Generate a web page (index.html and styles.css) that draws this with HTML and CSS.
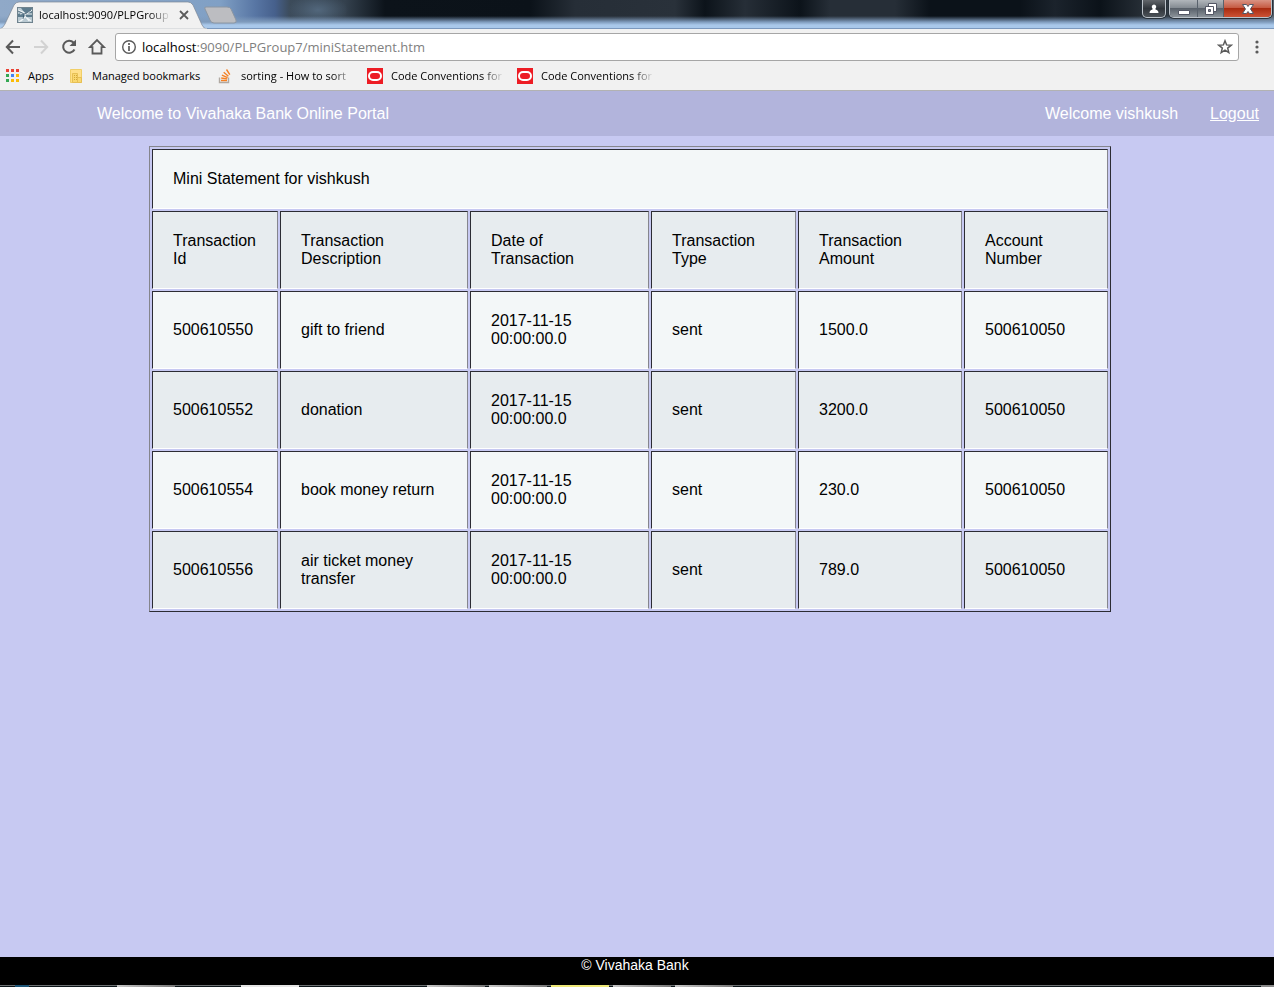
FILE: index.html
```html
<!DOCTYPE html>
<html lang="en">
<head>
<meta charset="utf-8">
<title>Mini Statement</title>
<link rel="stylesheet" href="styles.css">
</head>
<body>
<div class="browser">
  <div class="titlebar">
    <div class="tab">
      <svg class="tab-shape" viewBox="0 0 207 28" width="207" height="28" aria-hidden="true"><path d="M0 28 Q3 27 5 23 L14 4 Q16 1 19 1 H188 Q191 1 193 4 L202 24 Q204 28 207 28Z" fill="#f1f1f1" stroke="#7d8795" stroke-width=".7"/><path d="M0 27.500H207V28H0Z" fill="#f1f1f1"/></svg>
      <svg class="favicon" viewBox="0 0 16 16" width="16" height="16" aria-hidden="true"><path fill="#5e7c8e" d="M0 0h16v16H0z"/><path fill="#b9c9d2" d="M1 10h14v5H1zM1 1h3l3 4-6 2z"/><path d="M1 3l5 2 3 2 6-4M3 7l4-1 2 1 6 0M8 6v4l-4 4M8 9l4 5M2 15l4-3M10 11l4 3" fill="none" stroke="#f0f5f6" stroke-width="1.200"/><path d="M1 4l6 3 3-1 4-3M7 8l-1 4" fill="none" stroke="#28485e" stroke-width=".7"/><path fill="none" stroke="#70838e" d="M.5.5h15v15H.5z"/></svg>
      <span class="tab-title fade">localhost:9090/PLPGroup</span>
      <button class="tab-close" aria-label="Close tab"><svg viewBox="0 0 10 10" width="10" height="10"><path d="M1 1l8 8M9 1L1 9" stroke="#5a5a5a" stroke-width="1.800"/></svg></button>
    </div>
    <button class="new-tab" aria-label="New tab"><svg viewBox="0 0 36 18" width="36" height="18"><path d="M3 1H24Q27 1 28 3L33 14Q34 17 31 17H11Q8 17 7 14L2 3Q1 1 3 1Z" fill="#bcbdc1" stroke="#8b96a3"/></svg></button>
    <div class="window-controls">
      <button class="profile" aria-label="Profile"><svg viewBox="0 0 12 12" width="12" height="12"><path d="M6 1.500a2.300 2.300 0 0 1 1.500 4V6.500Q10.500 7 10.500 10H1.500Q1.500 7 4.500 6.500V5.500A2.300 2.300 0 0 1 6 1.500Z" fill="#fff"/></svg></button>
      <div class="control-group">
        <button class="minimize" aria-label="Minimize"><svg viewBox="0 0 14 14" width="14" height="14"><path d="M1.500 8.500h11v4h-11z" fill="#fff" stroke="#535765"/></svg></button>
        <button class="restore" aria-label="Restore"><svg viewBox="0 0 14 14" width="14" height="14"><path d="M4.500 1.500h8v8h-8z" fill="#fff" stroke="#535765"/><path d="M1.500 4.500h8v8h-8z" fill="#fff" stroke="#535765"/><path d="M4.500 7.500h2v2h-2z" fill="#889" stroke="#535765"/></svg></button>
        <button class="close" aria-label="Close window"><svg viewBox="0 0 14 14" width="14" height="14"><path d="M1.500 2.500h4L7 4.500 8.500 2.500h4L9.500 7l3 4.500h-4L7 9.500l-1.500 2h-4L4.500 7Z" fill="#fff" stroke="#535765"/></svg></button>
      </div>
    </div>
  </div>
  <div class="toolbar">
    <div class="nav">
      <button aria-label="Back"><svg viewBox="0 0 28 28" width="28" height="28"><path d="M20 14H7M13 7.500L6.800 14l6.200 6.500" fill="none" stroke="#5a5a5a" stroke-width="2"/></svg></button>
      <button aria-label="Forward" disabled><svg viewBox="0 0 28 28" width="28" height="28"><path d="M6 14h13M13 7.500l6.200 6.500-6.200 6.500" fill="none" stroke="#d2d2d2" stroke-width="2"/></svg></button>
      <button aria-label="Reload"><svg viewBox="0 0 28 28" width="28" height="28"><path d="M18.500 16.500a6 6 0 1 1-1-7l1.500 1.500" fill="none" stroke="#5a5a5a" stroke-width="2"/><path d="M20 6.500v6.500h-6.500z" fill="#5a5a5a"/></svg></button>
      <button aria-label="Home"><svg viewBox="0 0 28 28" width="28" height="28"><path d="M6 14.200L13 7l7 7.200h-2.500v6.300h-9v-6.300Z" fill="none" stroke="#5a5a5a" stroke-width="1.800"/></svg></button>
    </div>
    <div class="omnibox">
      <svg viewBox="0 0 16 16" width="16" height="16" aria-hidden="true"><circle cx="8" cy="8" r="6.300" fill="none" stroke="#5a5a5a" stroke-width="1.400"/><path d="M8 7v5M8 4v2" stroke="#5a5a5a" stroke-width="1.700"/></svg>
      <div class="address" role="textbox" aria-label="Address" contenteditable="true" spellcheck="false"><span class="host">localhost</span>:9090/PLPGroup7/miniStatement.htm</div>
      <button aria-label="Bookmark this page"><svg viewBox="0 0 16 16" width="16" height="16"><path d="M8 1.800l1.600 4.100 4.600.3-3.500 2.900 1.100 4.500L8 11.200l-3.800 2.400 1.100-4.500-3.500-2.900 4.600-.3Z" fill="none" stroke="#5a5a5a" stroke-width="1.500"/></svg></button>
    </div>
    <button class="menu" aria-label="Menu"><svg viewBox="0 0 4 14" width="4" height="14"><g fill="#5a5a5a"><circle cx="2" cy="2" r="1.600"/><circle cx="2" cy="7" r="1.600"/><circle cx="2" cy="12" r="1.600"/></g></svg></button>
  </div>
  <nav class="bookmarks" aria-label="Bookmarks">
    <a href="#" class="bookmark apps"><svg viewBox="0 0 16 16" width="16" height="16"><path fill="#ea4335" d="M2 1h3v3H2zM7 1h3v3H7zM12 1h3v3h-3z"/><path fill="#34a853" d="M2 6h3v3H2zM2 11h3v3H2z"/><path fill="#4285f4" d="M7 6h3v3H7z"/><path fill="#fbbc05" d="M12 6h3v3h-3zM7 11h3v3H7zM12 11h3v3h-3z"/></svg><span>Apps</span></a>
    <a href="#" class="bookmark"><svg viewBox="0 0 16 16" width="16" height="16"><path d="M2.500 1.500h11v13h-11z" fill="#ffe08a" stroke="#f1cf68"/><path d="M4.500 5.500h5v9h-5zM9.500 9.500h4v5h-4z" fill="#f9d86f" stroke="#e6bf55"/><path d="M6 7h1v1H6zM8 7h1v1H8zM6 9h1v1H6zM8 9h1v1H8zM6 11h1v1H6zM8 11h1v1H8z" fill="#d3a53a"/></svg><span>Managed bookmarks</span></a>
    <a href="#" class="bookmark"><svg viewBox="0 0 16 16" width="16" height="16"><path d="M2.500 9.500v5h9v-5" fill="none" stroke="#b0a9a2" stroke-width="1.400"/><path d="M4 12.500h6M4.200 10l6 .9M4.900 7.200l5.700 2.400M6.700 4.300l4.700 4M9.500 1.500l3.300 5.200" stroke="#f48024" stroke-width="1.400"/></svg><span class="fade">sorting - How to sort</span></a>
    <a href="#" class="bookmark"><svg viewBox="0 0 16 16" width="16" height="16"><path fill="#ed1c24" d="M0 0h16v16H0z"/><rect x="2" y="4" width="12" height="8" rx="4" fill="none" stroke="#fff" stroke-width="2"/></svg><span class="fade">Code Conventions for</span></a>
    <a href="#" class="bookmark"><svg viewBox="0 0 16 16" width="16" height="16"><path fill="#ed1c24" d="M0 0h16v16H0z"/><rect x="2" y="4" width="12" height="8" rx="4" fill="none" stroke="#fff" stroke-width="2"/></svg><span class="fade">Code Conventions for</span></a>
  </nav>
</div>
<header class="banner">
  <span>Welcome to Vivahaka Bank Online Portal</span>
  <span class="user">Welcome vishkush</span>
  <a href="#">Logout</a>
</header>
<main class="content">
  <table class="statement">
    <colgroup><col class="c-id"><col class="c-desc"><col class="c-date"><col class="c-type"><col class="c-amount"><col class="c-account"></colgroup>
    <tbody>
      <tr><td colspan="6">Mini Statement for vishkush</td></tr>
      <tr><th scope="col">Transaction Id</th><th scope="col">Transaction Description</th><th scope="col">Date of Transaction</th><th scope="col">Transaction Type</th><th scope="col">Transaction Amount</th><th scope="col">Account Number</th></tr>
      <tr><td>500610550</td><td>gift to friend</td><td>2017-11-15 00:00:00.0</td><td>sent</td><td>1500.0</td><td>500610050</td></tr>
      <tr><td>500610552</td><td>donation</td><td>2017-11-15 00:00:00.0</td><td>sent</td><td>3200.0</td><td>500610050</td></tr>
      <tr><td>500610554</td><td>book money return</td><td>2017-11-15 00:00:00.0</td><td>sent</td><td>230.0</td><td>500610050</td></tr>
      <tr><td>500610556</td><td>air ticket money transfer</td><td>2017-11-15 00:00:00.0</td><td>sent</td><td>789.0</td><td>500610050</td></tr>
    </tbody>
  </table>
</main>
<footer class="footer">© Vivahaka Bank</footer>
<div class="taskbar"><i class="start"></i><i class="task"></i><i class="task bright"></i><i class="task third"></i><i class="task"></i><i class="task alert"></i><i class="task"></i><i class="task"></i><i class="desktop"></i></div>
</body>
</html>
```
FILE: styles.css
```css
* { box-sizing: border-box; }
body {
  margin: 0;
  min-height: 100vh;
  display: flex;
  flex-direction: column;
  background: #c7c9f2;
  color: #000;
  font: 16px/18px "Liberation Sans", Arial, sans-serif;
}
button { margin: 0; padding: 0; border: 0; background: none; font: inherit; }
svg { display: block; flex: none; }

.browser {
  background: #f1f1f1;
  border-bottom: 1px solid #b2b2b2;
  font: 11px/16px "Open Sans", "Noto Sans", sans-serif;
}
.fade {
  overflow: hidden;
  white-space: nowrap;
  -webkit-mask-image: linear-gradient(to left, transparent, #000 22px);
  mask-image: linear-gradient(to left, transparent, #000 22px);
}
.titlebar {
  display: flex;
  align-items: flex-start;
  height: 29px;
  padding-right: 2px;
  border-bottom: 1px solid #7b98bd;
  background:
    linear-gradient(to bottom, transparent 16px, #7f9bbc 22px, #a9c8ea 25px),
    radial-gradient(ellipse 30px 16px at 318px 10px, #52677c, transparent),
    linear-gradient(to right, #90a9c8 0, #80a0c5 220px, #5876a4 255px, #46608c 275px, #3c4b5a 290px, #34414e 345px, #0c131a 385px, #0b1219 530px, #262e37 575px, #29313a 675px, #0c131a 705px, #262e37 745px, #0c131a 800px, #262e37 830px, #262e37 895px, #0b1219 930px, #0b1219 1020px, #1b232c 1055px, #0b1219 1100px, #2b333b 1150px, #56606b);
}
.tab {
  position: relative;
  display: flex;
  align-items: center;
  width: 203px;
  height: 29px;
  padding-left: 17px;
}
.tab-shape { position: absolute; left: 0; top: 1px; }
.favicon, .tab-title, .tab-close { position: relative; }
.tab-title { width: 132px; margin-left: 6px; }
.tab-close { margin-left: 8px; }
.new-tab { margin-top: 6px; }
.window-controls { display: flex; gap: 3px; margin-left: auto; }
.window-controls button { display: flex; align-items: center; justify-content: center; height: 17px; }
.profile, .control-group {
  border: 1px solid #bcc3ca;
  border-top: 0;
  border-radius: 0 0 5px 5px;
  overflow: hidden;
  box-shadow: 0 0 0 1px #28313a;
}
.window-controls .profile { width: 24px; height: 18px; background: linear-gradient(#62666b, #30353b 50%, #4c5258); }
.control-group { display: flex; height: 18px; }
.minimize, .restore { width: 28px; border-right: 1px solid #59626c; background: linear-gradient(#b1b6bb, #858c93 45%, #59616a 50%, #8b939a); }
.restore { width: 26px; }
.close { width: 47px; background: linear-gradient(#d99383, #c65b43 45%, #a92b10 50%, #cc5234); }

.toolbar { display: flex; align-items: center; height: 32px; padding-top: 4px; }
.nav { display: flex; margin-right: 3px; }
.omnibox {
  display: flex;
  align-items: center;
  flex: 1;
  height: 28px;
  padding: 0 5px;
  border: 1px solid #a6a6a6;
  border-radius: 3px;
  background: #fff;
}
.address {
  flex: 1;
  margin-left: 5px;
  color: #808080;
  font-size: 13px;
  line-height: 20px;
  white-space: nowrap;
}
.host { color: #000; }
.menu { display: flex; justify-content: center; width: 35px; }
.bookmarks { display: flex; gap: 13px; padding: 7px 4px 6px; }
.bookmark { display: flex; gap: 8px; color: #000; text-decoration: none; white-space: nowrap; }
.bookmark span { width: 112px; }
.bookmark .fade { width: 113px; }
.bookmark.apps span { width: 27px; }

.banner {
  display: flex;
  align-items: center;
  height: 45px;
  padding: 0 15px 0 97px;
  background: #b2b4dc;
  color: #fff;
}
.user { margin: 0 32px 0 auto; }
.banner a { color: #fff; }

.content { flex: 1; padding: 10px 163px 10px 149px; }
.statement {
  width: 100%;
  table-layout: fixed;
  border: 1px solid;
  border-color: #85858d #2c2c34 #2c2c34 #85858d;
  border-spacing: 2px;
}
.statement td, .statement th {
  padding: 20px;
  border: 1px solid;
  border-color: #2c2c34 #85858d #fff #2c2c34;
  background: #f3f7f8;
  font-weight: 400;
  text-align: left;
  vertical-align: middle;
}
.statement tr:nth-child(even) > * { background: #e7ecef; }
.c-id { width: 126px; }
.c-desc { width: 188px; }
.c-date { width: 179px; }
.c-type { width: 145px; }
.c-amount { width: 164px; }
.c-account { width: 144px; }

.footer {
  height: 28px;
  padding-right: 4px;
  background: #000;
  color: #fff;
  font-size: 14px;
  line-height: 16px;
  text-align: center;
}
.taskbar { display: flex; gap: 4px; height: 2px; background: linear-gradient(#6d7173 1px, #0c1519 1px); }
.start { width: 14px; margin: 0 84px 0 15px; background: #1d5577; }
.task { width: 58px; background: linear-gradient(to right, #c5c5c5, #777); }
.bright { margin-left: 62px; background: #e5e5e5; }
.third { margin-left: 124px; }
.alert { background: #eee878; }
.desktop { width: 13px; margin-left: auto; background: #888; }
```
